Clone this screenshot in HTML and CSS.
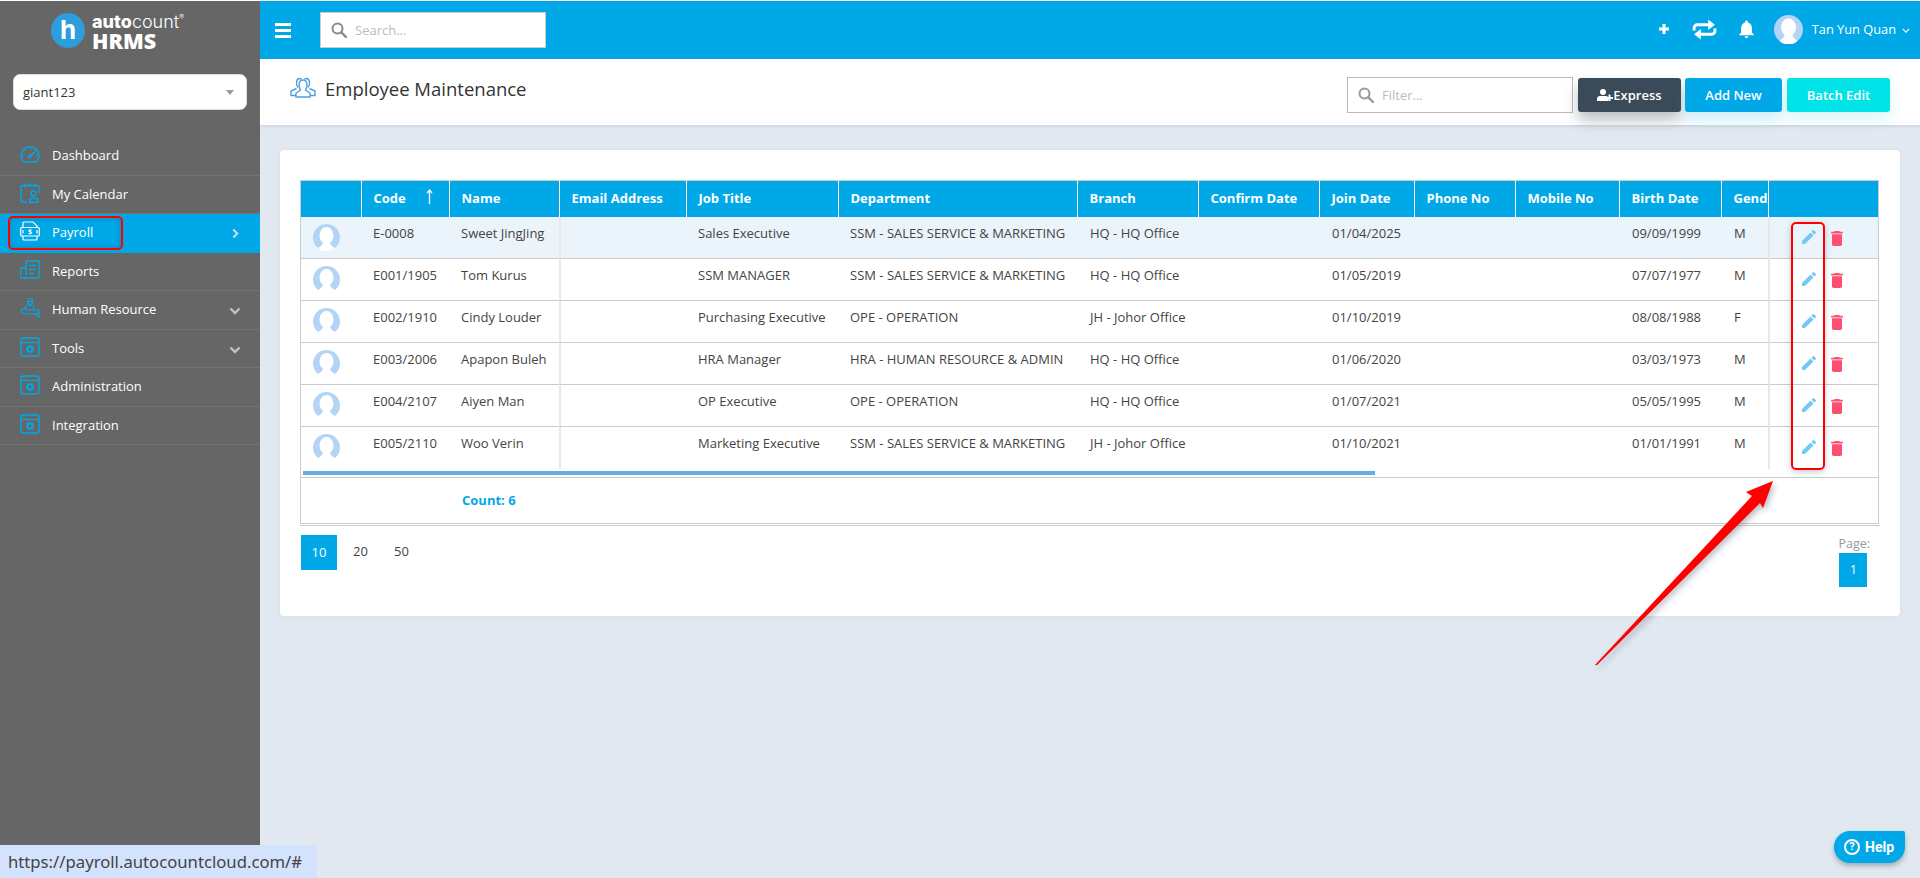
FILE: index.html
```html
<!DOCTYPE html>
<html lang="en">
<head>
<meta charset="utf-8">
<title>Employee Maintenance</title>
<link rel="stylesheet" href="styles.css">
</head>
<body>
<svg class="defs" width="0" height="0" aria-hidden="true">
  <symbol id="i-window" viewBox="0 0 20 20">
    <rect x="1" y="1" width="18" height="18" rx="2" fill="none" stroke="currentColor" stroke-width="1.400"/>
    <path d="M1 5.500h18" stroke="currentColor" stroke-width="1.200"/>
    <path d="M3.200 3.200h1M5.600 3.200h1" stroke="currentColor" stroke-width="1"/>
    <circle cx="10" cy="12" r="2.500" fill="none" stroke="currentColor" stroke-width="1.800"/>
    <path d="M10 7.800v1.600M10 14.600v1.600M5.800 12h1.600M12.600 12h1.600M7 9l1.100 1.100M11.900 13.900L13 15M13 9l-1.100 1.100M8.100 13.900L7 15" stroke="currentColor" stroke-width="1.600"/>
  </symbol>
  <symbol id="i-face" viewBox="0 0 27 27">
    <circle cx="13.500" cy="13.500" r="13.500" fill="#b3d4f5"/>
    <ellipse cx="13.500" cy="11.500" rx="7" ry="8.500" fill="#fff"/>
    <path d="M10 17c0 4-2 5-5 7 2 2 5 3.500 8.500 3.500s6.500-1.500 8.500-3.500c-3-2-5-3-5-7z" fill="#fff"/>
  </symbol>
  <symbol id="i-edit" viewBox="3 3 18 18">
    <path d="M3 17.250V21h3.750L17.810 9.940l-3.750-3.750L3 17.250zM20.710 7.040c.39-.39.39-1.020 0-1.410l-2.340-2.340c-.39-.39-1.020-.39-1.410 0l-1.830 1.830 3.750 3.750 1.830-1.830z" fill="currentColor"/>
  </symbol>
  <symbol id="i-trash" viewBox="5 3 14 18">
    <path d="M6 19c0 1.100.9 2 2 2h8c1.100 0 2-.9 2-2V7H6v12zM19 4h-3.500l-1-1h-5l-1 1H5v2h14V4z" fill="currentColor"/>
  </symbol>
  <symbol id="i-search" viewBox="0 0 16 16">
    <circle cx="6.500" cy="6.500" r="5" fill="none" stroke="currentColor" stroke-width="2"/>
    <path d="M10.300 10.300L15 15" stroke="currentColor" stroke-width="2.400" stroke-linecap="round"/>
  </symbol>
  <symbol id="i-down" viewBox="0 0 12 8">
    <path d="M1.500 1.500L6 6l4.500-4.500" fill="none" stroke="currentColor" stroke-width="2.400"/>
  </symbol>
</svg>

<div class="app">
  <aside class="sidebar">
    <div class="logo">
      <span class="logo-mark">h</span>
      <div class="logo-text">
        <div class="logo-top"><b>auto</b>count<sup>®</sup></div>
        <div class="logo-hrms">HRMS</div>
      </div>
    </div>
    <div class="company">
      <span>giant123</span>
      <i class="caret"></i>
    </div>
    <nav class="nav">
      <a class="nav-item">
        <svg class="nav-icon" viewBox="0 0 20 20" fill="none" stroke="currentColor" stroke-width="1.400"><path d="M3.500 18h13a9 9 0 1 0-13 0z"/><path d="M10.500 11.500l4.500-3.500" stroke-width="1.800"/><circle cx="9.500" cy="12.500" r="1.400"/><path d="M10 3v1.500M4.500 5.500l1 1M2.500 11.500H4M15.500 5.500l-1 1M16 11.500h1.500"/></svg>
        <span>Dashboard</span>
      </a>
      <a class="nav-item">
        <svg class="nav-icon" viewBox="0 0 20 20" fill="none" stroke="currentColor" stroke-width="1.400"><path d="M7 19H3a2 2 0 0 1-2-2V4.500a2 2 0 0 1 2-2h14a2 2 0 0 1 2 2V10"/><path d="M5 .5v4M10 .5v4M15 .5v4"/><circle cx="13.500" cy="10.500" r="2.500"/><path d="M9.500 19.300v-1.500a2.500 2.500 0 0 1 2.500-2.500h3.500a2.500 2.500 0 0 1 2.500 2.500v1.500z"/></svg>
        <span>My Calendar</span>
      </a>
      <a class="nav-item nav-active">
        <svg class="nav-icon nav-icon-white" viewBox="0 0 20 20" fill="none" stroke="currentColor" stroke-width="1.200"><path d="M3 6V2a1 1 0 0 1 1-1h9l4 4v1M17 15v3a1 1 0 0 1-1 1H4a1 1 0 0 1-1-1v-3"/><rect x=".7" y="6.500" width="18.600" height="8.500" rx="1"/><path d="M3 9v3.500M17 9v3.500"/><text class="pay-sign" x="10" y="13.300">$</text></svg>
        <span>Payroll</span>
        <svg class="nav-chev nav-chev-right" viewBox="0 0 8 12" fill="none" stroke="currentColor" stroke-width="2.400"><path d="M1.500 1.500L6 6l-4.500 4.500"/></svg>
      </a>
      <a class="nav-item">
        <svg class="nav-icon" viewBox="0 0 20 20" fill="none" stroke="currentColor" stroke-width="1.400"><path d="M6 15V2a1 1 0 0 1 1-1h12v16a1 1 0 0 1-1 1H2a1.500 1.500 0 0 1-1.500-1.500V9a1 1 0 0 1 1-1H6"/><path d="M6 16.500A1.500 1.500 0 0 1 4 18M9 5.500h7M9 9.500h7M9 13.500h5"/></svg>
        <span>Reports</span>
      </a>
      <a class="nav-item">
        <svg class="nav-icon" viewBox="0 0 20 20" fill="none" stroke="currentColor" stroke-width="1.200"><ellipse cx="10" cy="3.500" rx="2.500" ry="3"/><path d="M7.500 3.500h5M6 12V9.500a2 2 0 0 1 2-2h4a2 2 0 0 1 2 2V12"/><path d="M1 12l4-2 1 2h13v7H19l-4-3H6a5 5 0 0 1-5-4zM15 15.500h4"/></svg>
        <span>Human Resource</span>
        <svg class="nav-chev"><use href="#i-down"/></svg>
      </a>
      <a class="nav-item">
        <svg class="nav-icon"><use href="#i-window"/></svg>
        <span>Tools</span>
        <svg class="nav-chev"><use href="#i-down"/></svg>
      </a>
      <a class="nav-item">
        <svg class="nav-icon"><use href="#i-window"/></svg>
        <span>Administration</span>
      </a>
      <a class="nav-item">
        <svg class="nav-icon"><use href="#i-window"/></svg>
        <span>Integration</span>
      </a>
    </nav>
  </aside>

  <main class="main">
    <header class="topbar">
      <div class="bars"><i></i><i></i><i></i></div>
      <div class="top-search">
        <svg class="search-icon"><use href="#i-search"/></svg>
        <span>Search...</span>
      </div>
      <div class="top-actions">
        <svg class="t-plus" viewBox="0 0 12 12"><path d="M6 1v10M1 6h10" stroke="#fff" stroke-width="3"/></svg>
        <svg class="t-repeat" viewBox="0 0 24 20"><path d="M2 11V8.500a3 3 0 0 1 3-3h11M22 9v2.500a3 3 0 0 1-3 3H8" fill="none" stroke="#fff" stroke-width="2.800"/><path d="M15.500 .5l6.500 5-6.500 5zM8.500 9.500l-6.500 5 6.500 5z" fill="#fff"/></svg>
        <svg class="t-bell" viewBox="4 2 16 20"><path d="M12 22c1.100 0 2-.9 2-2h-4c0 1.100.9 2 2 2zm6-6v-5c0-3.070-1.630-5.640-4.500-6.320V4c0-.83-.67-1.500-1.500-1.500s-1.500.67-1.500 1.500v.68C7.640 5.360 6 7.920 6 11v5l-2 2v1h16v-1l-2-2z" fill="#fff"/></svg>
        <svg class="t-face"><use href="#i-face"/></svg>
        <span class="t-name">Tan Yun Quan</span>
        <svg class="t-chev" viewBox="0 0 10 6" fill="none" stroke="#fff" stroke-width="1.400"><path d="M1 1l4 4 4-4"/></svg>
      </div>
    </header>

    <section class="page-head">
      <svg class="head-icon" viewBox="0 0 26 22" fill="none" stroke="#4f9fe0" stroke-width="1.400"><path d="M8 11.500C5.500 9 6 2.500 9.500 2.500c.8 0 1.500.3 2 .8M18 11.500c2.500-2.500 2-9-1.500-9-.8 0-1.500.3-2 .8"/><path d="M6.500 12.500L1 15v4.500h5M19.500 12.500L25 15v4.500h-5"/><path d="M13 4c-3 0-4 2.500-4 5s1.500 5 1.500 5L6 17v4h14v-4l-4.500-3s1.500-2.500 1.500-5-1-5-4-5z"/></svg>
      <h1>Employee Maintenance</h1>
      <div class="head-tools">
        <div class="filter">
          <svg class="filter-icon"><use href="#i-search"/></svg>
          <span>Filter...</span>
        </div>
        <button class="btn btn-dark">
          <svg class="user-plus" viewBox="0 0 16 12"><circle cx="6" cy="3" r="3" fill="#fff"/><path d="M0 12V9.500C0 8 1.500 7 3 7h6c1.500 0 2.500 1 2.500 2.500V12z" fill="#fff"/><path d="M12.500 5.500v6.500M9 9h7" stroke="#fff" stroke-width="2"/></svg>Express
        </button>
        <button class="btn btn-blue">Add New</button>
        <button class="btn btn-cyan">Batch Edit</button>
      </div>
    </section>

    <section class="content">
      <div class="card">
        <div class="grid">
          <table class="emp">
            <colgroup>
              <col class="c1"><col class="c2"><col class="c3"><col class="c4"><col class="c5"><col class="c6"><col class="c7"><col class="c8"><col class="c9"><col class="c10"><col class="c11"><col class="c12"><col class="c13"><col class="c14">
            </colgroup>
            <thead>
              <tr>
                <th></th>
                <th><span class="code-head">Code<svg class="sort" viewBox="0 0 7 15" fill="none" stroke="#fff" stroke-width="1.300"><path d="M3.500 15V1M1 4l2.500-3L6 4"/></svg></span></th>
                <th>Name</th><th>Email Address</th><th>Job Title</th><th>Department</th><th>Branch</th><th>Confirm Date</th><th>Join Date</th><th>Phone No</th><th>Mobile No</th><th>Birth Date</th><th class="th-clip">Gend</th><th></th>
              </tr>
            </thead>
            <tbody>
              <tr class="selected">
                <td class="pic"><svg class="face"><use href="#i-face"/></svg></td><td>E-0008</td><td>Sweet JingJing</td><td class="sep"></td><td>Sales Executive</td><td>SSM - SALES SERVICE &amp; MARKETING</td><td>HQ - HQ Office</td><td></td><td>01/04/2025</td><td></td><td></td><td>09/09/1999</td><td>M</td>
                <td class="sep acts"><svg class="edit"><use href="#i-edit"/></svg><svg class="trash"><use href="#i-trash"/></svg></td>
              </tr>
              <tr>
                <td class="pic"><svg class="face"><use href="#i-face"/></svg></td><td>E001/1905</td><td>Tom Kurus</td><td class="sep"></td><td>SSM MANAGER</td><td>SSM - SALES SERVICE &amp; MARKETING</td><td>HQ - HQ Office</td><td></td><td>01/05/2019</td><td></td><td></td><td>07/07/1977</td><td>M</td>
                <td class="sep acts"><svg class="edit"><use href="#i-edit"/></svg><svg class="trash"><use href="#i-trash"/></svg></td>
              </tr>
              <tr>
                <td class="pic"><svg class="face"><use href="#i-face"/></svg></td><td>E002/1910</td><td>Cindy Louder</td><td class="sep"></td><td>Purchasing Executive</td><td>OPE - OPERATION</td><td>JH - Johor Office</td><td></td><td>01/10/2019</td><td></td><td></td><td>08/08/1988</td><td>F</td>
                <td class="sep acts"><svg class="edit"><use href="#i-edit"/></svg><svg class="trash"><use href="#i-trash"/></svg></td>
              </tr>
              <tr>
                <td class="pic"><svg class="face"><use href="#i-face"/></svg></td><td>E003/2006</td><td>Apapon Buleh</td><td class="sep"></td><td>HRA Manager</td><td>HRA - HUMAN RESOURCE &amp; ADMIN</td><td>HQ - HQ Office</td><td></td><td>01/06/2020</td><td></td><td></td><td>03/03/1973</td><td>M</td>
                <td class="sep acts"><svg class="edit"><use href="#i-edit"/></svg><svg class="trash"><use href="#i-trash"/></svg></td>
              </tr>
              <tr>
                <td class="pic"><svg class="face"><use href="#i-face"/></svg></td><td>E004/2107</td><td>Aiyen Man</td><td class="sep"></td><td>OP Executive</td><td>OPE - OPERATION</td><td>HQ - HQ Office</td><td></td><td>01/07/2021</td><td></td><td></td><td>05/05/1995</td><td>M</td>
                <td class="sep acts"><svg class="edit"><use href="#i-edit"/></svg><svg class="trash"><use href="#i-trash"/></svg></td>
              </tr>
              <tr class="last">
                <td class="pic"><svg class="face"><use href="#i-face"/></svg></td><td>E005/2110</td><td>Woo Verin</td><td class="sep"></td><td>Marketing Executive</td><td>SSM - SALES SERVICE &amp; MARKETING</td><td>JH - Johor Office</td><td></td><td>01/10/2021</td><td></td><td></td><td>01/01/1991</td><td>M</td>
                <td class="sep acts"><svg class="edit"><use href="#i-edit"/></svg><svg class="trash"><use href="#i-trash"/></svg></td>
              </tr>
            </tbody>
          </table>
          <div class="scroll-track"><div class="scroll-thumb"></div></div>
          <div class="grid-foot"><span>Count: 6</span></div>
        </div>
        <div class="grid-rule"></div>
        <div class="pager-row">
          <div class="sizes">
            <span class="size size-on">10</span>
            <span class="size">20</span>
            <span class="size">50</span>
          </div>
          <div class="pages">
            <span class="page-label">Page:</span>
            <span class="page-num">1</span>
          </div>
        </div>
      </div>
    </section>
  </main>
</div>

<div class="mark mark-payroll"></div>
<div class="mark mark-edit"></div>
<svg class="arrow" viewBox="0 0 1920 878" width="1920" height="878"><polygon points="1773,481 1746,492 1752,496 1595,665 1597,665 1760,503 1763,508" fill="#f00"/></svg>
<div class="status">https://payroll.autocountcloud.com/#</div>
<div class="help"><span class="help-q">?</span>Help</div>
</body>
</html>
```

FILE: styles.css
```css
* { box-sizing: border-box; }
html, body { margin: 0; height: 878px; overflow: hidden; }
body { background: #fff; font-family: "Open Sans", "Liberation Sans", sans-serif; font-size: 13px; color: #444; position: relative; }
.defs { position: absolute; }
.app { display: flex; height: 877px; margin-top: 1px; background: #e1e8f0; }

/* sidebar */
.sidebar { width: 260px; flex: none; background: #666; color: #fff; display: flex; flex-direction: column; }
.logo { height: 73px; padding: 12px 0 0 51px; display: flex; gap: 7px; align-items: flex-start; }
.logo-mark { width: 34px; height: 35px; border-radius: 50%; background: #2b9edb; color: #fff; font: 700 26px/33px Inter, "Open Sans", sans-serif; text-align: center; }
.logo-text { color: #fff; }
.logo-top { font: 300 18px/18px Inter, sans-serif; white-space: nowrap; }
.logo-top b { font-weight: 800; }
.logo-top sup { font-size: 7px; line-height: 0; vertical-align: 8px; }
.logo-hrms { font: 800 21.500px/19px "Open Sans", sans-serif; }
.company { margin-left: 13px; width: 234px; height: 36px; background: #fff; border: 1px solid #ddd; border-radius: 7px; color: #333; display: flex; align-items: center; justify-content: space-between; padding: 0 12px 0 9px; }
.caret { width: 0; height: 0; border-left: 4px solid transparent; border-right: 4px solid transparent; border-top: 5px solid #999; }
.nav { margin-top: 27px; display: flex; flex-direction: column; }
.nav-item { height: 38.500px; display: flex; align-items: center; position: relative; padding: 0 0 1px 20px; border-bottom: 1px solid #737373; color: #fff; }
.nav-item span { margin-left: 12px; }
.nav-icon { width: 20px; height: 20px; color: #00a8e8; flex: none; margin-top: -2px; }
.nav-icon-white { color: #fff; }
.pay-sign { font: 700 7px "Open Sans", sans-serif; fill: #fff; stroke: none; text-anchor: middle; }
.nav-active { background: #00a8e8; border-bottom-color: #00a8e8; }
.nav-chev { width: 12px; height: 8px; color: #bfc3c7; position: absolute; right: 19px; top: 16px; }
.nav-chev-right { width: 7px; height: 11px; right: 21px; top: 14px; color: #c8dbe6; }

/* main */
.main { flex: 1; min-width: 0; display: flex; flex-direction: column; }
.topbar { height: 58px; background: #00a8e8; display: flex; align-items: center; flex: none; padding-left: 15px; }
.bars { width: 16px; display: flex; flex-direction: column; gap: 3px; margin-right: 29px; }
.bars i { height: 3px; background: #fff; display: block; }
.top-search { width: 226px; height: 36px; background: #fff; border: 1px solid #ccc; display: flex; align-items: center; padding-left: 10px; color: #bbb; }
.search-icon { width: 16px; height: 16px; color: #888; margin-right: 8px; }
.top-actions { margin-left: auto; display: flex; align-items: center; height: 100%; color: #fff; padding-bottom: 2px; }
.t-plus { width: 12px; height: 12px; margin-right: 22px; }
.t-repeat { width: 25px; height: 21px; margin-right: 22px; }
.t-bell { width: 15px; height: 18px; margin-right: 20px; }
.t-face { width: 29px; height: 29px; margin-right: 9px; }
.t-name { font-size: 12.800px; white-space: nowrap; }
.t-chev { width: 8px; height: 5px; margin: 2px 10px 0 6px; }
.page-head { height: 66px; background: #fff; flex: none; display: flex; align-items: flex-start; padding: 0 30px 0 30px; box-shadow: 0 1px 3px rgba(120,140,160,.25); position: relative; }
.head-icon { width: 26px; height: 22px; margin-top: 17px; flex: none; }
.page-head h1 { font-size: 18.500px; font-weight: 500; color: #333; margin: 18px 0 0 9px; line-height: 24px; }
.head-tools { margin-left: auto; display: flex; align-items: flex-start; padding-top: 18px; }
.filter { width: 226px; height: 36px; border: 1px solid #bbb; display: flex; align-items: center; padding-left: 10px; color: #bbb; background: #fff; margin-right: 5px; }
.filter-icon { width: 16px; height: 16px; color: #999; margin-right: 8px; }
.btn { height: 34px; border: 0; border-radius: 3px; color: #fff; font: 600 13px "Open Sans", sans-serif; margin-top: 1px; padding: 0; display: flex; align-items: center; justify-content: center; }
.btn-dark { width: 103px; background: #3b4a58; margin-right: 4px; box-shadow: 0 8px 14px rgba(60,74,88,.35); }
.btn-blue { width: 97px; background: #00a8e8; margin-right: 5px; box-shadow: 0 8px 14px rgba(0,168,232,.2); }
.btn-cyan { width: 103px; background: #00e3e8; box-shadow: 0 8px 14px rgba(0,200,220,.15); }
.user-plus { width: 16px; height: 12px; }

/* card and grid */
.content { padding: 25px 20px; flex: 1; }
.card { height: 466px; background: #fff; border-radius: 4px; padding: 30px 21px 0 20px; box-shadow: 0 0 4px rgba(130,150,170,.12); }
.grid { border: 1px solid #ccc; height: 344px; overflow: hidden; }
.emp { border-collapse: separate; border-spacing: 0; table-layout: fixed; width: 1578px; }
.c1 { width: 60px; } .c2 { width: 88px; } .c3 { width: 110px; } .c4 { width: 127px; } .c5 { width: 152px; } .c6 { width: 239px; } .c7 { width: 121px; } .c8 { width: 121px; } .c9 { width: 95px; } .c10 { width: 101px; } .c11 { width: 104px; } .c12 { width: 102px; } .c13 { width: 47px; } .c14 { width: 111px; }
.emp th { height: 36px; background: #00a8e8; color: #fff; font-weight: 700; font-size: 13px; text-align: left; padding: 0 0 2px 11.500px; border-left: 1px solid #fff; white-space: nowrap; overflow: hidden; }
.emp th:first-child { border-left: 0; }
.code-head { display: inline-flex; align-items: center; }
.sort { width: 7px; height: 15px; margin-left: 20px; margin-top: -3px; }
.emp td { height: 42px; padding: 6px 0 0 12px; vertical-align: top; line-height: 20px; border-bottom: 1px solid #ccc; white-space: nowrap; overflow: hidden; color: #444; }
.emp td:nth-child(n+7) { padding-left: 13px; }
.emp .last td { border-bottom: 0; }
.emp .selected td { background: #ebf3fb; }
.emp td.sep { border-left: 2px solid #e8e8e8; padding-left: 11px; }
.emp td.pic { padding: 7px 0 0 12px; }
.face { width: 27px; height: 27px; display: block; }
.emp td.acts { padding: 13px 0 0 32px; }
.edit { width: 14px; height: 14px; color: #6fcbf2; vertical-align: top; }
.trash { width: 12px; height: 15px; color: #ff4f70; margin: 1px 0 0 15px; vertical-align: top; }
.scroll-track { height: 8px; padding: 2px 0 2px 2px; }
.scroll-thumb { width: 1072px; height: 4px; background: #62aee8; }
.grid-foot { border-top: 1px solid #ccc; height: 46px; padding: 12px 0 0 161px; font-weight: 700; color: #00a8e8; line-height: 20px; }
.grid-rule { height: 1px; margin-top: 1px; background: #ccc; width: 1580px; }
.pager-row { display: flex; justify-content: space-between; align-items: flex-start; padding: 9px 9px 0 1px; }
.sizes { display: flex; }
.size { height: 35px; width: 41px; line-height: 33px; text-align: center; color: #444; }
.size-on { width: 36px; background: #00a8e8; color: #fff; margin-right: 3px; line-height: 35px; }
.pages { display: flex; flex-direction: column; align-items: flex-start; }
.page-label { color: #999; font-size: 12.500px; line-height: 18px; }
.page-num { width: 28px; height: 34px; line-height: 34px; background: #00a8e8; color: #fff; text-align: center; font-size: 12px; margin-left: 1px; }

/* overlays */
.mark { position: absolute; border: 2px solid #f00; border-radius: 5px; box-shadow: 0 2px 6px rgba(60,80,110,.3); }
.mark-payroll { left: 8px; top: 216px; width: 115px; height: 34px; box-shadow: inset 0 0 6px rgba(30,70,120,.35); }
.mark-edit { left: 1791px; top: 222px; width: 34px; height: 248px; }
.arrow { position: absolute; left: 0; top: 0; pointer-events: none; filter: drop-shadow(2px 3px 3px rgba(70,80,100,.4)); }
.status { position: absolute; left: 0; bottom: 0; width: 317px; height: 33px; background: #d3e3fd; color: #444; border-radius: 0 5px 0 0; font: 400 16.700px/33px "Noto Sans", "Open Sans", sans-serif; padding-left: 8px; white-space: nowrap; overflow: hidden; }
.help { position: absolute; left: 1834px; top: 831px; width: 71px; height: 32px; background: #00a8e8; color: #fff; border-radius: 16px 2px 16px 16px; display: flex; align-items: center; padding-left: 10px; font: 700 14px Roboto, sans-serif; box-shadow: 0 3px 5px rgba(70,80,100,.4); }
.help-q { width: 16px; height: 16px; border: 2px solid #fff; border-radius: 50%; font-size: 11px; line-height: 12px; text-align: center; margin-right: 5px; }
```
